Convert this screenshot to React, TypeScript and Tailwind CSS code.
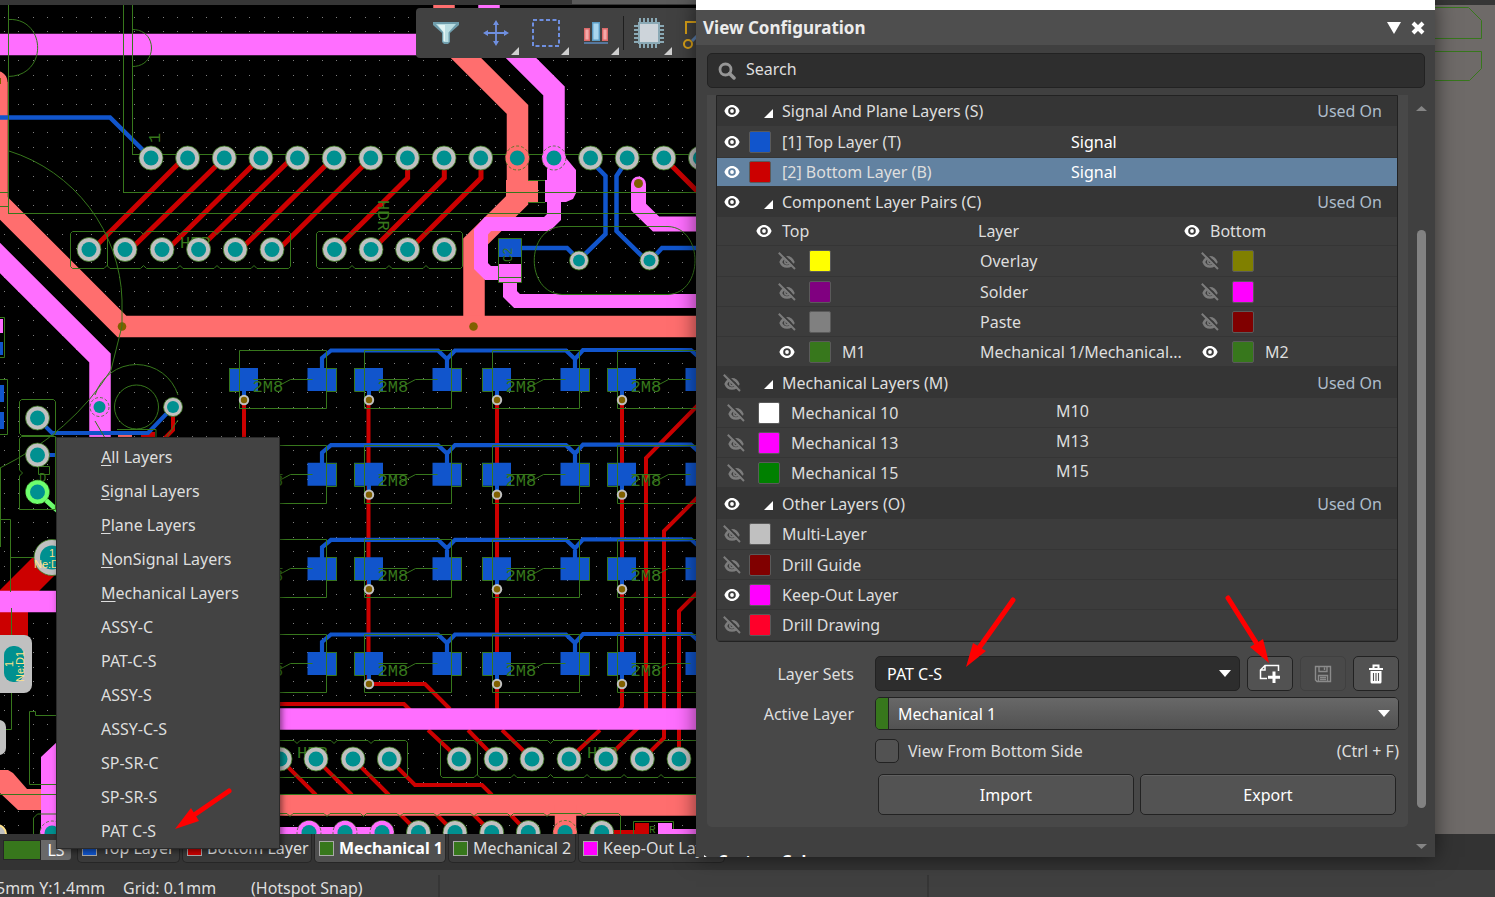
import React from "react";

const GREEN = "#37771c";
const BLUE = "#1155cc";
const RED = "#cc0000";
const SALMON = "#ff6e6e";
const PINK = "#ff6eff";
const RING = "#c0c0c0";
const TEAL = "#009090";
const OLIVE = "#806000";

/* ---------- board drawing ---------- */

function gridDots() {
  let d = "";
  for (let r = 0; r < 58; r++) {
    for (let c = 0; c < 49; c++) {
      d += `M${Math.round(4 + c * 14.435)} ${Math.round(17 + r * 14.435)}h1v1h-1z`;
    }
  }
  return d;
}
const DOTS = gridDots();

function Pad({ x, y, ring = RING, r = 12, hole = 7.5 }: { x: number; y: number; ring?: string; r?: number; hole?: number }) {
  return (
    <g>
      <circle cx={x} cy={y} r={r} fill={ring} stroke={GREEN} strokeWidth={0.8} strokeDasharray={ring === RING ? undefined : "3 2"} />
      <circle cx={x} cy={y} r={hole} fill={TEAL} />
    </g>
  );
}

function Via({ x, y }: { x: number; y: number }) {
  return (
    <g>
      <circle cx={x} cy={y} r={5.2} fill={RING} />
      <circle cx={x} cy={y} r={3.2} fill={OLIVE} />
    </g>
  );
}

function header(x1: number, y1: number, x2: number, y2: number, notches: number[]) {
  let d = `M${x1 + 2} ${y1}`;
  notches.forEach((n) => (d += `H${n - 3}l3 3l3 -3`));
  d += `H${x2 - 2}l2 2V${y2 - 2}l-2 2`;
  [...notches].reverse().forEach((n) => (d += `H${n + 3}l-3 -3l-3 3`));
  d += `H${x1 + 2}l-2 -2V${y1 + 2}z`;
  return d;
}

const COLS = [239.5, 364.5, 492.5, 617.5];
const ROWS = [0, 94.65, 189.3, 284];
const TOP_PADS = Array.from({ length: 16 }, (_, i) => 151 + i * 36.63);
const LOW_PADS = [89, 125, 162, 198.6, 235.3, 272, 334.5, 371, 407.6, 444.3];
const BOT_PADS = [280, 316, 353, 389.3, 459, 496, 532, 569, 606, 642.3, 679];

function Board() {
  return (
    <svg className="absolute inset-0 h-full w-full" viewBox="0 5 1495 829" preserveAspectRatio="xMinYMin slice" aria-label="Board layout" role="img">
      <path d={DOTS} fill="#808080" />
      <rect x="720" y="5" width="775" height="829" fill="#6e6a68" />
      <g fill="none" stroke={GREEN}>
        <path d="M1400 7.500H1468.500L1481.500 20.500V38.500H1400M1400 51.500H1481.500V68.500L1469.500 80.500H1400" />
      </g>

      {/* bottom copper */}
      <g fill="none" stroke={RED} strokeWidth={5}>
        <path d="M180 162L97 245M219 163L134 246M255 163L171 246M290 160L208 240M328 163L244 246M371 158L281 247" />
        <path d="M407.600 160V178L334 251M444.300 160V178L371 251M481 160V178L408 251M664 158L700 194" />
        <path d="M244 400V440M368.500 400V684H425L450 709M497 400V715M622 400V706L618 712" strokeWidth={4} />
        <path d="M700 403L646 458V720L606 759M700 495L664 531V738L642 760M700 590L679 611V759" strokeWidth={4} />
        <path d="M278 704H404L412 712M428 730L459 759M468 730L496 759M502 730L532 759M600 730L569 759" strokeWidth={4} />
        <path d="M280 759L316 795M316 759L352 795M353 759L389 795M389 759L415 785H482L492 795M400 814L419 833M436 814L455 833M473 814L492 833M510 814L528 833" strokeWidth={4} />
        <path d="M173 407V430L164 439" strokeWidth={4} />
        <path d="M602 832H649" strokeWidth={4} />
      </g>
      <g fill={RED}>
        <path d="M33 557L56 574L28 602V636H0V590zM141 432h14v8h-14zM635 823h14v11h-14z" />
      </g>

      {/* top copper */}
      <g fill="none" stroke={BLUE} strokeWidth={4.5}>
        <path d="M590 160L605.500 176V234L579 260M627 160L616.500 176V231L647 261M521 248H567L579 260M649 262L662 248H700" />
        {ROWS.map((dy) => (
          <path key={dy} transform={`translate(0 ${dy})`} strokeWidth={4.2} d="M322 372V358L331 350.500H438L447 359L455 350.500H566L575 359L583 350H691L703 361M447 358V372M575 358V372" />
        ))}
        {ROWS.map((dy) =>
          COLS.map((x) => <path key={`${x}-${dy}`} d={`M${x + 4.5} ${388 + dy}v10`} strokeWidth={4} />)
        )}
      </g>
      {ROWS.map((dy) =>
        COLS.map((x) => (
          <path key={`${x}-${dy}`} fill={BLUE} d={`M${x - 10.5} ${368 + dy}h29v23h-29zM${x + 68} ${368 + dy}h29.500v23h-29.500z`} />
        ))
      )}
      <path fill={BLUE} d="M0 342h3v13h-3zM0 385h4v17h-4zM0 412h4v17h-4z" />

      {/* highlighted nets */}
      <g fill="none" stroke={SALMON} strokeWidth={21.500}>
        <path d="M444 0V36L517.500 109.500V200L474 243V327" />
        <path d="M-3 82V201.500L122 326.500H700M280 805H700" />
        <path d="M565.500 805V834" />
      </g>
      <path fill={SALMON} d="M-3 71C2 71 7.500 75 7.500 82H-3zM506 180H538V202H506zM0 770H8L13 773L27 789H58V810H18L0 793zM118 435h14v5h-14z" />
      <g fill="none" stroke={PINK} strokeWidth={21.500}>
        <path d="M0 44.500H507.500L554 91V165M489 0V44" />
        <path d="M-10 248L100 358V440M0 601.500H60M278 719H700" />
      </g>
      <g fill="none" stroke={PINK} strokeWidth={14}>
        <path d="M554 195V217L547 224H488L481 232V266L488 273H502M510 280V294L517 301H700" />
        <path d="M638.500 184V207L656 224H700" strokeWidth={15} />
        <path d="M280 831H380" strokeWidth={8} />
      </g>
      <circle cx="638.500" cy="184" r="7.500" fill={PINK} />
      <path fill={PINK} d="M554 158H566L576 170V193L573 199L566 202H545V180H547V160zM499 264h22v19h-22zM0 319h3v14h-3zM41 757L58 741V834H41zM658 823h14v6h24v5h-38z" />
      <g fill="none" stroke={BLUE} strokeWidth={4.5}>
        <path d="M0 117.500H110L150 157" />
        <path d="M37 418L52 433H148L173 407M37 455H58" strokeWidth={4} />
      </g>
      <path fill={BLUE} d="M499 239h22v18h-22z" />
      <path d="M37 492L58 511" stroke="#6eff6e" strokeWidth={5} />
      <g fill={OLIVE}>
        <circle cx="122" cy="326.500" r="4.300" />
        <circle cx="473.500" cy="326.500" r="4.300" />
        <circle cx="638.500" cy="183.500" r="4.500" />
        <rect x="0" y="78" width="1" height="6" />
      </g>

      {/* outlines */}
      <g fill="none" stroke={GREEN} strokeWidth={1}>
        <path shapeRendering="crispEdges" d="M8.500 5V213.500H700M123.500 5V192.500H700M132.500 5V154.500H700M0 192.500H8M0 206.500H8" />
        <path d="M8 19.500C46 17 49 76 8 76.500M132 29.500C158 29 158 67 132 66.500" />
        <path d="M9 151A161 161 0 0 1 122 300V326L111 370Q72 432 0 468" />
        <path d={header(70.5, 231.5, 290.5, 268.5, [107, 143.5, 180, 217, 254])} />
        <path d={header(316.5, 231.5, 462.5, 268.5, [352, 389, 426])} />
        <path d="M107.500 234V266M477.500 743V775" />
        <path d={header(230.5, 740.5, 407.5, 777.5, [297, 334, 371])} />
        <path d={header(440.5, 740.5, 720.5, 777.5, [477, 514, 550.5, 587, 624, 661])} />
        <path d={header(230.5, 813.5, 620.5, 850.5, [290, 327, 363.5, 400, 437, 474, 510.5, 547, 584])} />
        <path d="M0 794.500H700M498.500 238.500h23v44h-23zM498.500 277.500h23M528 180.500h17M528 202.500h17" />
        <path d="M562 226.500H668C704 228 704 293 668 294.500H562C525 293 525 228 562 226.500z" />
        <path d="M633.500 834V821.500H673.500V829" />
        <path d="M19.500 401.500l2 -2H53.500l2 2V433.500l-2 2H21.500l-2 -2zM19.500 438.500l2 -2H55.500V509.500H19.500V476l3 -3l-3 -3z" />
        <circle cx="136.500" cy="407" r="22" />
        <path d="M95 395A43.500 43.500 0 0 1 178 395M95 421L105 438M178 420L166 438M117 429.500H156V440" />
        <path d="M0 317.500H4.500V357.500H0M0 379.500H7.500V434.500H0M0.500 468V547M0 519.500H10.500V592M10 557.500H34M11.500 608V636M11.500 693V729.500H6" />
        <path d="M58 715.500H35.500V711.500H29.500V784.500H58M33.500 834V818l4 -4H58M38.500 466.500h11v8h-11z" />
        {ROWS.map((dy) =>
          COLS.map((x) => (
            <g key={`${x}-${dy}`} transform={`translate(${x} ${Math.round(dy)})`}>
              <path d="M0 350.500H87V408.500H0zM-10 368.500h10v23h-10zM87 368.500h10v23h-10z" />
              <path d="M14 379.500H43M35 388L51 379.500H73" />
            </g>
          ))
        )}
      </g>

      {/* designators */}
      <g fill={GREEN} fontFamily="'Liberation Mono', monospace" fontSize="17">
        {ROWS.map((dy) =>
          COLS.map((x) => (
            <text key={`${x}-${dy}`} x={x + 13} y={391.5 + dy}>2M8</text>
          ))
        )}
        <text x="180" y="248">HDR</text>
        <text x="297" y="758">HDR</text>
        <text x="587" y="758">HDR</text>
        <text transform="translate(378 200) rotate(90)">HDR</text>
        <text transform="translate(160 143) rotate(-90)">1</text>
        <text transform="translate(512 262) rotate(-90)" fontSize="12">C2</text>
        <text x="39" y="482" fontSize="12">D</text>
        <text x="649" y="833" fontSize="11">R</text>
      </g>

      {/* pads */}
      {TOP_PADS.map((x, i) => (
        <Pad key={x} x={x} y={158} ring={i === 10 ? SALMON : i === 11 ? PINK : RING} />
      ))}
      {LOW_PADS.map((x) => (
        <Pad key={x} x={x} y={249.5} />
      ))}
      {BOT_PADS.map((x) => (
        <Pad key={x} x={x} y={759} />
      ))}
      {[309, 345, 382, 418.5, 455, 491.7, 528.3, 565, 601.7].map((x, i) => (
        <Pad key={x} x={x} y={832.5} ring={i < 3 ? PINK : i === 7 ? SALMON : RING} />
      ))}
      <Pad x={52} y={833} ring={PINK} />
      <Pad x={579} y={260.5} r={9.5} hole={6} />
      <Pad x={649.500} y={260.5} r={9.5} hole={6} />
      <Pad x={173} y={407} r={9.5} hole={6} />
      <Pad x={99.500} y={407} r={9.5} hole={6} ring={PINK} />
      <Pad x={37.500} y={418} />
      <Pad x={37.500} y={455} />
      <Pad x={37.500} y={492} ring="#6eff6e" />
      <Pad x={52} y={557.5} r={18} hole={12} />
      {ROWS.map((dy) => COLS.map((x) => <Via key={`${x}-${dy}`} x={x + 4.5} y={400 + dy} />))}
      <rect x="-20" y="635" width="52" height="58" rx="8" fill={RING} />
      <rect x="4" y="646" width="20" height="36" rx="9" fill={TEAL} />
      <rect x="-20" y="720" width="26" height="35" rx="7" fill={RING} />
      <circle cx="-3" cy="834" r="9" fill={RING} stroke="#ffe28a" strokeWidth={2} />
      <g fill="#ffe28a" fontFamily="'Liberation Sans', sans-serif" fontSize="11">
        <text x="49" y="557">1</text>
        <text x="34" y="568">Ne:D1</text>
        <text transform="translate(13 667) rotate(-90)">1</text>
        <text transform="translate(24 682) rotate(-90)">Ne:D1</text>
      </g>
    </svg>
  );
}

/* ---------- small icons ---------- */

function EyeIcon() {
  return (
    <svg width="16" height="14" viewBox="0 0 16 14" aria-hidden="true">
      <path fillRule="evenodd" fill="#fff" d="M8 1C4.400 1 1.700 3.400.400 7c1.300 3.600 4 6 7.600 6s6.300-2.400 7.600-6C14.300 3.400 11.600 1 8 1zM8 3.200a3.800 3.800 0 1 1 0 7.600a3.800 3.800 0 1 1 0-7.600z" />
      <circle cx="8" cy="7" r="1.900" fill="#fff" />
    </svg>
  );
}

function EyeOffIcon() {
  return (
    <svg width="18" height="18" viewBox="0 0 18 18" fill="none" aria-hidden="true">
      <path d="M2.800 10C4 6.800 6.500 5.300 9 5.300s5 1.500 6.200 4.700C14 13.200 11.500 14.500 9 14.500S4 13.200 2.800 10z" stroke="#7c7c7c" strokeWidth="2.700" />
      <circle cx="9" cy="9.700" r="2.200" stroke="#7c7c7c" strokeWidth="1.600" />
      <path d="M2.700 0L18.700 16" stroke="#3a3a3a" strokeWidth="2" />
      <path d="M.800.800L17 17" stroke="#7c7c7c" strokeWidth="2" />
    </svg>
  );
}

function Toggle({ on, label }: { on: boolean; label: string }) {
  return (
    <button type="button" aria-label={`Show ${label}`} aria-pressed={on} className="flex h-[18px] w-[18px] items-center justify-center">
      {on ? <EyeIcon /> : <EyeOffIcon />}
    </button>
  );
}

function Swatch({ className }: { className: string }) {
  return <span className={`block h-[22px] w-[22px] rounded-[2px] border border-[#5a5a5a] ${className}`} />;
}

function Down({ className = "fill-white" }: { className?: string }) {
  return (
    <svg width="12" height="7" viewBox="0 0 12 7" className={className} aria-hidden="true">
      <path d="M0 0h12l-6 7z" />
    </svg>
  );
}

/* ---------- layer table ---------- */

function GroupRow({ title, on, h }: { title: string; on: boolean; h: string }) {
  return (
    <tr className={`flex items-center bg-[#353535] ${h}`}>
      <td className="w-8 pl-[6px]"><Toggle on={on} label={title} /></td>
      <td className="w-[33px] pl-[15px]">
        <svg width="9" height="9" viewBox="0 0 9 9" className="mt-1" aria-hidden="true"><path d="M9 0v9H0z" fill="#fff" /></svg>
      </td>
      <th scope="colgroup" className="flex-1 text-left font-normal">{title}</th>
      <td className="pr-[15px]"><a href="#used-on" className="text-[#adbccb]">Used On</a></td>
    </tr>
  );
}

function LayerRow({ name, kind, on, color, h = "h-[30px]", selected = false }: { name: string; kind?: string; on: boolean; color: string; h?: string; selected?: boolean }) {
  return (
    <tr className={`flex items-center border-b border-[#353535] ${h} ${selected ? "bg-[#6282a1]" : ""}`}>
      <td className="w-8 pl-[6px]"><Toggle on={on} label={name} /></td>
      <td className="w-[33px]"><Swatch className={color} /></td>
      <td className="w-[289px]">{name}</td>
      <td className="flex-1 text-white">{kind}</td>
    </tr>
  );
}

function MechRow({ name, kind, color }: { name: string; kind: string; color: string }) {
  return (
    <tr className="flex h-[30px] items-center border-b border-[#353535]">
      <td className="w-[41px] pl-[10px]"><Toggle on={false} label={name} /></td>
      <td className="w-[33px]"><Swatch className={color} /></td>
      <td className="w-[265px]">{name}</td>
      <td className="flex-1 pb-1">{kind}</td>
    </tr>
  );
}

function PairRow({ name, on, left, right, leftName, rightName, h = "h-[30px]" }: { name: string; on: boolean; left: string; right: string; leftName?: string; rightName?: string; h?: string }) {
  return (
    <tr className={`flex items-center border-b border-[#353535] ${h}`}>
      <td className="w-[92px] pl-[61px]"><Toggle on={on} label={`${name} top`} /></td>
      <td className="w-[33px]"><Swatch className={left} /></td>
      <td className="w-[138px]">{leftName}</td>
      <td className="w-[221px] whitespace-nowrap">{name}</td>
      <td className="w-[31px]"><Toggle on={on} label={`${name} bottom`} /></td>
      <td className="w-[33px]"><Swatch className={right} /></td>
      <td className="flex-1">{rightName}</td>
    </tr>
  );
}

function LayerTable() {
  return (
    <table className="mr-[10px] ml-[9px] block rounded-b border border-[#222] bg-[#3c3c3c]">
      <tbody className="block">
        <GroupRow title="Signal And Plane Layers (S)" on h="h-[30px]" />
        <LayerRow name="[1] Top Layer (T)" kind="Signal" on color="bg-[#1155cc]" h="h-[32px]" />
        <LayerRow name="[2] Bottom Layer (B)" kind="Signal" on color="bg-[#cc0000]" h="h-[29px]" selected />
        <GroupRow title="Component Layer Pairs (C)" on h="h-[30px]" />
        <tr className="flex h-[29px] items-center border-b border-[#353535]">
          <td className="w-[65px] pl-[38px]"><Toggle on label="all top layers" /></td>
          <th scope="col" className="w-[196px] text-left font-normal">Top</th>
          <th scope="col" className="w-[205px] text-left font-normal">Layer</th>
          <td className="w-[27px]"><Toggle on label="all bottom layers" /></td>
          <th scope="col" className="flex-1 text-left font-normal">Bottom</th>
        </tr>
        <PairRow name="Overlay" on={false} left="bg-[#ffff00]" right="bg-[#808000]" h="h-[31px]" />
        <PairRow name="Solder" on={false} left="bg-[#800080]" right="bg-[#ff00ff]" />
        <PairRow name="Paste" on={false} left="bg-[#808080]" right="bg-[#800000]" />
        <PairRow name="Mechanical 1/Mechanical..." on left="bg-[#37771c]" right="bg-[#37771c]" leftName="M1" rightName="M2" />
        <GroupRow title="Mechanical Layers (M)" on={false} h="h-[31px]" />
        <MechRow name="Mechanical 10" kind="M10" color="bg-white" />
        <MechRow name="Mechanical 13" kind="M13" color="bg-[#ff00ff]" />
        <MechRow name="Mechanical 15" kind="M15" color="bg-[#008000]" />
        <GroupRow title="Other Layers (O)" on h="h-[31px]" />
        <LayerRow name="Multi-Layer" on={false} color="bg-[#c0c0c0]" h="h-[31px]" />
        <LayerRow name="Drill Guide" on={false} color="bg-[#800000]" />
        <LayerRow name="Keep-Out Layer" on color="bg-[#ff00ff]" />
        <LayerRow name="Drill Drawing" on={false} color="bg-[#ff002a]" h="h-[31px]" />
      </tbody>
    </table>
  );
}

const iconButton = "flex w-[46px] items-center justify-center rounded-[5px] border border-[#222] bg-[#525252]";
const wideButton = "h-[41px] flex-1 rounded-[5px] border border-[#222] bg-[#535353] text-white shadow-[inset_0_1px_0_#606060]";

function ViewConfiguration() {
  return (
    <aside className="absolute top-0 right-[60px] bottom-10 z-20 flex w-[739px] flex-col bg-[#404040] shadow-[0_0_20px_rgba(0,0,0,0.55)]">
      <div className="h-[10px] shrink-0 bg-white" />
      <header className="flex h-[35px] shrink-0 items-center bg-[#4e4e4e] pr-[9px] pl-[7px]">
        <h2 className="flex-1 text-[17px] font-bold text-[#ececec]">View Configuration</h2>
        <button type="button" aria-label="Panel menu" className="mr-[9px]">
          <svg width="14" height="12" viewBox="0 0 14 12" aria-hidden="true"><path d="M0 0h14L7 12z" fill="#fff" /></svg>
        </button>
        <button type="button" aria-label="Close">
          <svg width="16" height="16" viewBox="0 0 16 16" aria-hidden="true"><path d="M3 3l10 10M13 3L3 13" stroke="#fff" strokeWidth="4" /></svg>
        </button>
      </header>
      <label className="mt-2 mr-[10px] ml-[11px] flex h-[35px] shrink-0 items-center rounded-[5px] border border-[#222] bg-[#2e2e2e] pl-[10px]">
        <svg width="18" height="18" viewBox="0 0 18 18" fill="none" stroke="#969696" aria-hidden="true">
          <circle cx="7.500" cy="7.500" r="5.500" strokeWidth="2.800" /><path d="M11.500 11.500L16 16" strokeWidth="3.500" strokeLinecap="round" />
        </svg>
        <input aria-label="Search" placeholder="Search" className="ml-[10px] h-8 flex-1 bg-transparent pb-1 outline-none placeholder:text-[#dedede] placeholder:opacity-100" />
      </label>
      <div className="mt-[7px] flex min-h-0 flex-1">
        <div className="min-w-0 flex-1 overflow-hidden">
          <section className="ml-[11px] rounded-b-[5px] bg-[#484848] pb-3">
            <LayerTable />
            <div className="mt-[14px] mr-[9px] grid grid-cols-[147px_1fr] items-center gap-x-[21px] gap-y-[6px]">
              <label htmlFor="sets" className="text-right">Layer Sets</label>
              <div className="flex h-[35px] gap-[7px]">
                <div className="relative flex-1">
                  <select id="sets" className="h-full w-full appearance-none rounded-[5px] border border-[#222] bg-[#2d2d2d] pl-[11px] text-white">
                    <option>PAT C-S</option>
                  </select>
                  <span className="pointer-events-none absolute inset-y-0 right-[9px] flex items-center"><Down /></span>
                </div>
                <button type="button" aria-label="Add layer set" className={iconButton}>
                  <svg width="22" height="20" viewBox="0 0 22 20" fill="none" stroke="#fff" aria-hidden="true">
                    <path d="M8 14.500H1.500V6L6 1.500H19.500V7M1.500 6H6V1.500" strokeWidth="1.500" />
                    <path d="M15 7.500V19M9 13.200H21" strokeWidth="3" />
                  </svg>
                </button>
                <button type="button" disabled aria-label="Save layer set" className="flex w-[46px] items-center justify-center rounded-[5px] border border-[#404040] bg-[#494949]">
                  <svg width="18" height="18" viewBox="0 0 18 18" fill="none" stroke="#8b8b8b" strokeWidth="1.400" aria-hidden="true">
                    <path d="M1.500 1.500H16.500V16.500H3L1.500 15zM5 1.500V6.500H13V1.500M4.500 16V10.500H13.500V16M6 12.500H12M6 14.500H12M10.500 2.500V5" />
                  </svg>
                </button>
                <button type="button" aria-label="Delete layer set" className={iconButton}>
                  <svg width="16" height="20" viewBox="0 0 16 20" aria-hidden="true">
                    <path d="M1 5H15M5.500 4V1.500H10.500V4" fill="none" stroke="#fff" strokeWidth="2" />
                    <path d="M2.500 7H13.500V18a1.500 1.500 0 0 1-1.500 1.500H4A1.500 1.500 0 0 1 2.500 18z" fill="#fff" />
                    <path d="M5.500 9V17M8 9V17M10.500 9V17" stroke="#525252" strokeWidth="1.100" />
                  </svg>
                </button>
              </div>
              <label htmlFor="active" className="text-right">Active Layer</label>
              <div className="relative flex h-[33px] overflow-hidden rounded-[5px] border border-[#222]">
                <span className="w-[13px] border-r border-[#222] bg-[#37771c]" />
                <select id="active" className="h-full flex-1 appearance-none bg-linear-to-b from-[#686868] to-[#525252] pl-[9px] text-white">
                  <option>Mechanical 1</option>
                </select>
                <span className="pointer-events-none absolute inset-y-0 right-2 flex items-center"><Down /></span>
              </div>
            </div>
            <div className="mt-[9px] mr-[9px] ml-[168px] flex items-center gap-[9px]">
              <input id="flip" type="checkbox" className="h-6 w-6 appearance-none rounded-[5px] border border-[#222] bg-[#525252]" />
              <label htmlFor="flip" className="flex-1">View From Bottom Side</label>
              <span>(Ctrl + F)</span>
            </div>
            <div className="mt-[11px] mr-3 ml-[171px] flex gap-[6px]">
              <button type="button" className={wideButton}>Import</button>
              <button type="button" className={wideButton}>Export</button>
            </div>
          </section>
          <h3 className="mt-[22px] flex items-center gap-[6px] pl-2 leading-6 font-bold text-white">
            <svg width="9" height="13" viewBox="0 0 9 13" aria-hidden="true"><path d="M0 0l9 6.500L0 13z" fill="#fff" /></svg>
            System Colors
          </h3>
        </div>
        <div className="flex w-[27px] flex-col items-center" aria-hidden="true">
          <svg width="11" height="5" viewBox="0 0 11 5" className="mt-[11px]"><path d="M0 5h11L5.500 0z" fill="#858585" /></svg>
          <div className="mt-[119px] mb-9 w-[9px] flex-1 rounded-full bg-[#828282]" />
          <svg width="11" height="5" viewBox="0 0 11 5" className="mb-2"><path d="M0 0h11L5.500 5z" fill="#858585" /></svg>
        </div>
      </div>
    </aside>
  );
}

/* ---------- floating toolbar ---------- */

function Tool({ label, more = true, children }: { label: string; more?: boolean; children: React.ReactNode }) {
  return (
    <button type="button" aria-label={label} className="relative flex h-[50px] w-[50px] shrink-0 items-center justify-center">
      {children}
      {more && (
        <svg width="8" height="8" viewBox="0 0 8 8" className="absolute right-[2px] bottom-[3px]" aria-hidden="true"><path d="M8 0v8H0z" fill="#d0d0d0" /></svg>
      )}
    </button>
  );
}

function Toolbar() {
  return (
    <div role="toolbar" aria-label="Active bar" className="absolute top-2 left-[416px] z-10 flex w-[320px] overflow-hidden rounded-l-[4px] bg-[#414141] pl-[5px]">
      <Tool label="Filter" more={false}>
        <svg width="26" height="24" viewBox="0 0 26 24" aria-hidden="true">
          <path d="M0 1H26V4L17 12V21L15 23H11L9 21V12L0 4z" fill="#6f9dac" />
          <path d="M3 3H23L15.500 11.500V21H10.500V11.500z" fill="#b9dde2" />
          <path d="M5 4H12V20H10.500V11z" fill="#e2f4f4" />
        </svg>
      </Tool>
      <Tool label="Move">
        <svg width="26" height="26" viewBox="0 0 26 26" aria-hidden="true">
          <path d="M13 2V24M2 13H24" stroke="#6f8fe0" strokeWidth="1.800" />
          <path d="M13 0l3 5h-6zM13 26l3-5h-6zM0 13l5-3v6zM26 13l-5-3v6z" fill="#6f8fe0" />
        </svg>
      </Tool>
      <Tool label="Select area">
        <svg width="28" height="28" viewBox="0 0 28 28" aria-hidden="true">
          <rect x="1" y="1" width="26" height="26" fill="none" stroke="#6f8fe0" strokeWidth="2" strokeDasharray="4 2.500" />
        </svg>
      </Tool>
      <Tool label="Align">
        <svg width="24" height="22" viewBox="0 0 24 22" aria-hidden="true">
          <path d="M.700 6.700h4.600v11.600H.700zM18.700 6.700h4.600v11.600h-4.600z" fill="#f3a9a9" stroke="#dc6a6a" strokeWidth="1.400" />
          <path d="M8.700.700h6.600v17.600H8.700z" fill="#a9d6ee" stroke="#5b9cc4" strokeWidth="1.400" />
          <path d="M0 21H24" stroke="#56779e" strokeWidth="2" />
        </svg>
      </Tool>
      <span className="my-2 ml-[2px] w-px bg-[#1e1e1e]" />
      <Tool label="Place component">
        <svg width="30" height="30" viewBox="0 0 30 30" aria-hidden="true">
          <path d="M6 0v30M10 0v30M14 0v30M18 0v30M22 0v30M0 8h30M0 12h30M0 16h30M0 20h30M0 24h30" stroke="#8aa9b5" strokeWidth="2" />
          <rect x="4" y="4" width="22" height="22" fill="#8aa9b5" />
          <rect x="6" y="6" width="18" height="18" fill="#cdd4da" />
        </svg>
      </Tool>
      <svg width="40" height="34" viewBox="0 0 40 34" className="mt-2 ml-2 shrink-0" aria-hidden="true">
        <path d="M4 18V6H20" fill="none" stroke="#d8a018" strokeWidth="2" />
        <path d="M10 25L20 15" stroke="#5b7fae" strokeWidth="3" />
        <circle cx="6" cy="28" r="4" fill="none" stroke="#d8a018" strokeWidth="2" />
      </svg>
    </div>
  );
}

/* ---------- layer set menu ---------- */

const MENU: { text: string; key?: boolean }[] = [
  { text: "All Layers", key: true },
  { text: "Signal Layers", key: true },
  { text: "Plane Layers", key: true },
  { text: "NonSignal Layers", key: true },
  { text: "Mechanical Layers", key: true },
  { text: "ASSY-C" },
  { text: "PAT-C-S" },
  { text: "ASSY-S" },
  { text: "ASSY-C-S" },
  { text: "SP-SR-C" },
  { text: "SP-SR-S" },
  { text: "PAT C-S" },
];

function LayerSetMenu() {
  return (
    <div role="menu" className="absolute bottom-12 left-14 z-10 flex w-[224px] flex-col border border-[#2a2a2a] bg-[#434343] pt-[2px] shadow-[2px_2px_6px_rgba(0,0,0,0.5)]">
      {MENU.map(({ text, key }) => (
        <button key={text} type="button" role="menuitem" className="h-[34px] pl-11 text-left">
          {key ? <><span className="underline underline-offset-2">{text[0]}</span>{text.slice(1)}</> : text}
        </button>
      ))}
    </div>
  );
}

/* ---------- bottom bars ---------- */

function LayerTab({ label, color, width, active = false }: { label: string; color: string; width: string; active?: boolean }) {
  return (
    <button
      type="button"
      role="tab"
      aria-selected={active}
      className={`flex h-[29px] shrink-0 items-center gap-[5px] rounded-b-[5px] border border-t-0 border-[#262626] pl-1 whitespace-nowrap ${width} ${active ? "bg-[#4f4f4f] font-bold text-white" : "bg-[#3a3a3a]"}`}
    >
      <span className={`h-[15px] w-[15px] shrink-0 border border-[#a8a8a8] ${color}`} />
      {label}
    </button>
  );
}

function Annotations() {
  return (
    <svg className="pointer-events-none absolute inset-0 z-30 h-full w-full" viewBox="0 0 1495 897" preserveAspectRatio="xMinYMin slice" aria-hidden="true">
      <g stroke="#ff0000" strokeWidth="5" strokeLinecap="round">
        <path d="M229 791L194 815M1013 600L979 648M1228 598L1257 644" />
      </g>
      <path fill="#ff0000" d="M175 829L191 808L199 821zM966 667L973 643L986 651zM1269 663L1250 647L1263 639z" />
    </svg>
  );
}

export default function App() {
  return (
    <div className="relative flex h-screen min-h-[600px] flex-col overflow-hidden bg-[#333] font-['Noto_Sans','Open_Sans',sans-serif] text-[16px] text-[#dedede]">
      <div className="flex h-[5px] shrink-0 bg-[#363636]">
        <div className="ml-[572px] h-1 w-[300px] bg-[#5a5a5a]" />
      </div>
      <main className="relative min-h-0 flex-1 overflow-hidden bg-black">
        <Board />
      </main>
      <div className="flex h-9 shrink-0 items-start bg-[#333]">
        <span className="mt-[6px] ml-[3px] h-5 w-[38px] border border-[#262626] bg-[#37771c]" />
        <button type="button" className="mt-[6px] mr-[6px] h-5 w-[30px] rounded-r-[3px] bg-[#696969] leading-5 text-white">LS</button>
        <div role="tablist" aria-label="Layers" className="flex gap-[2px]">
          <LayerTab label="Top Layer" color="bg-[#1155cc]" width="w-[103px]" />
          <LayerTab label="Bottom Layer" color="bg-[#cc0000]" width="w-[130px]" />
          <LayerTab label="Mechanical 1" color="bg-[#37771c]" width="w-[132px]" active />
          <LayerTab label="Mechanical 2" color="bg-[#37771c]" width="w-[128px]" />
          <LayerTab label="Keep-Out Layer" color="bg-[#ff00ff]" width="w-[147px]" />
        </div>
      </div>
      <footer className="flex h-[27px] shrink-0 items-end bg-[#404040] leading-[18px]">
        <span className="-ml-1 w-[127px] whitespace-nowrap">5mm Y:1.4mm</span>
        <span className="w-32 whitespace-nowrap">Grid: 0.1mm</span>
        <span className="w-[187px] whitespace-nowrap">(Hotspot Snap)</span>
        <span className="h-[22px] w-[491px] border-x-2 border-[#363636]" />
      </footer>
      <Toolbar />
      <LayerSetMenu />
      <ViewConfiguration />
      <Annotations />
    </div>
  );
}
